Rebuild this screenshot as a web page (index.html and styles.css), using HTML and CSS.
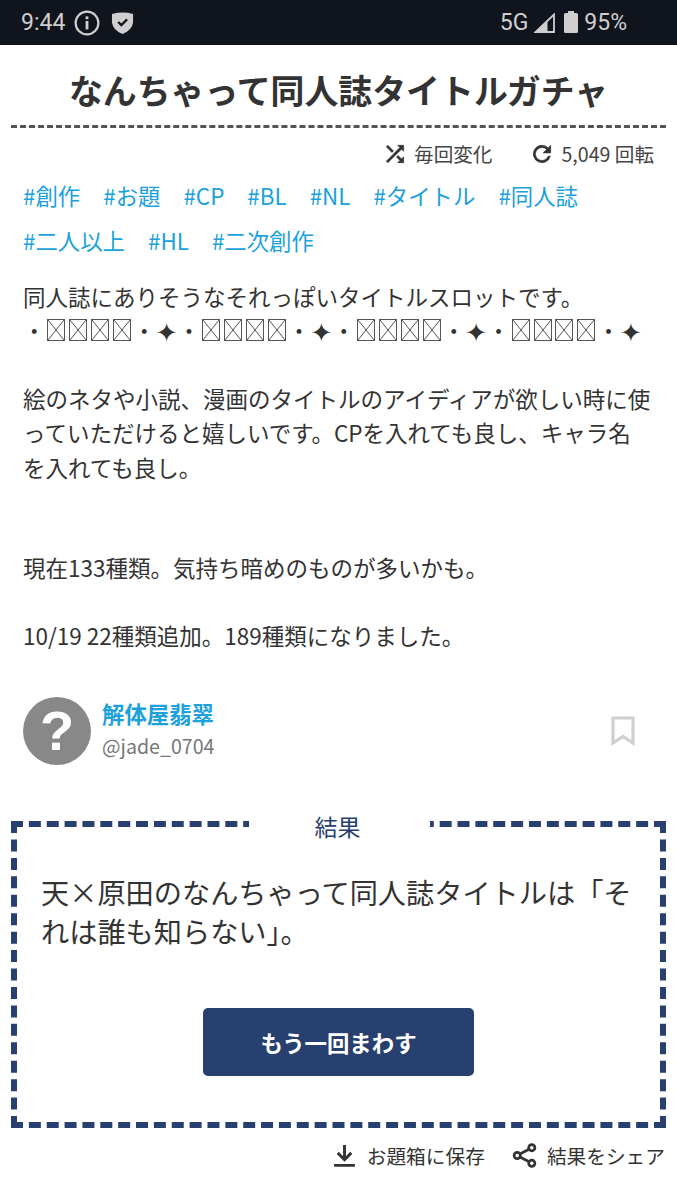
FILE: index.html
```html
<!DOCTYPE html>
<html lang="ja">
<head>
  <meta charset="UTF-8" />
  <title>なんちゃって同人誌タイトルガチャ</title>
  <link rel="stylesheet" href="styles.css">
</head>
<body>
  <!-- status bar -->
  <div class="statusBar">
    <div class="statusGroup">
      <span class="clock">9:44</span>
      <svg class="infoIcon" viewBox="0 0 26 26"><circle cx="13" cy="13" r="11.4" fill="none" stroke="#d0d0d0" stroke-width="2.2"/><rect x="11.6" y="11" width="2.8" height="8.4" fill="#d0d0d0"/><rect x="11.6" y="6.4" width="2.8" height="2.8" fill="#d0d0d0"/></svg>
      <svg class="shieldIcon" viewBox="0 0 24 24"><path d="M1 3 Q12 0 23 3 V12 Q22 20 12 24 Q2 20 1 12Z" fill="#cfcfcf"/><path d="M7.5 11.5 L10.8 14.8 L16.8 8.8" fill="none" stroke="#10141c" stroke-width="2.4"/></svg>
    </div>
    <div class="statusGroup statusRight">
      <span>5G</span>
      <svg class="signalIcon" viewBox="0 0 21 20"><path d="M20 1.5 V19 H1.5Z" fill="none" stroke="#cfcfcf" stroke-width="1.8"/><path d="M13.5 7.5 V20 H0 L13.5 7.5Z" fill="#cfcfcf"/></svg>
      <svg class="batteryIcon" viewBox="0 0 14 22"><path d="M4 2 V0 H10 V2 H12.5 Q14 2 14 3.5 V20.5 Q14 22 12.5 22 H1.5 Q0 22 0 20.5 V3.5 Q0 2 1.5 2Z" fill="#cfcfcf"/></svg>
      <span>95%</span>
    </div>
  </div>

  <div class="page">
    <h1 class="title">なんちゃって同人誌タイトルガチャ</h1>

    <div class="stats">
      <span class="stat">
        <svg class="statIcon" viewBox="0 0 24 24"><path d="M10.6 9.2 5.4 4 4 5.4l5.2 5.2 1.4-1.4zM14.5 4l2 2L4 18.6 5.4 20 18 7.5l2 2V4h-5.5zm.3 9.4-1.4 1.4 3.1 3.1L14.5 20H20v-5.5l-2 2-3.2-3.1z"/></svg>
        毎回変化
      </span>
      <span class="stat">
        <svg class="statIcon" viewBox="0 0 24 24"><path d="M17.65 6.35A8 8 0 1 0 19.73 14h-2.08A6 6 0 1 1 12 6c1.66 0 3.14.69 4.22 1.78L13 11h7V4l-2.35 2.35z"/></svg>
        5,049 回転
      </span>
    </div>

    <div class="tags">
      <a class="tag">#創作</a>
      <a class="tag">#お題</a>
      <a class="tag">#CP</a>
      <a class="tag">#BL</a>
      <a class="tag">#NL</a>
      <a class="tag">#タイトル</a>
      <a class="tag">#同人誌</a>
      <a class="tag">#二人以上</a>
      <a class="tag">#HL</a>
      <a class="tag">#二次創作</a>
    </div>

    <div class="description">
      <p class="intro">同人誌にありそうなそれっぽいタイトルスロットです。<br>
      ・<i class="tofu"></i><i class="tofu"></i><i class="tofu"></i><i class="tofu"></i>・<span class="star">✦</span>・<i class="tofu"></i><i class="tofu"></i><i class="tofu"></i><i class="tofu"></i>・<span class="star">✦</span>・<i class="tofu"></i><i class="tofu"></i><i class="tofu"></i><i class="tofu"></i>・<span class="star">✦</span>・<i class="tofu"></i><i class="tofu"></i><i class="tofu"></i><i class="tofu"></i>・<span class="star">✦</span></p>
      <p>絵のネタや小説、漫画のタイトルのアイディアが欲しい時に使っていただけると嬉しいです。CPを入れても良し、キャラ名<br>を入れても良し。</p>
      <p class="gapBefore">現在133種類。気持ち暗めのものが多いかも。</p>
      <p>10/19 22種類追加。189種類になりました。</p>
    </div>

    <div class="author">
      <div class="avatar">?</div>
      <div class="authorText">
        <div class="authorName">解体屋翡翠</div>
        <div class="authorId">@jade_0704</div>
      </div>
      <svg class="bookmark" viewBox="0 0 24 30"><path d="M2 2 H22 V27 L12 20.5 L2 27Z" fill="none" stroke="#cfcfcf" stroke-width="3.2"/></svg>
    </div>

    <div class="result">
      <div class="resultLabel">結果</div>
      <p class="resultText">天×原田のなんちゃって同人誌タイトルは「それは誰も知らない」。</p>
      <button class="againBtn">もう一回まわす</button>
    </div>

    <div class="actions">
      <span class="action">
        <svg class="actionIcon" viewBox="0 0 24 24"><path d="M12 2v13M5.5 9.5 12 16l6.5-6.5M2 21.5h20" fill="none" stroke="#333" stroke-width="2.8"/></svg>
        お題箱に保存
      </span>
      <span class="action">
        <svg class="actionIcon" viewBox="0 0 24 24"><g fill="none" stroke="#333" stroke-width="2.6"><circle cx="19" cy="4.5" r="3"/><circle cx="5" cy="12" r="3"/><circle cx="19" cy="19.5" r="3"/><path d="M7.6 10.6 16.4 6M7.6 13.4l8.8 4.6"/></g></svg>
        結果をシェア
      </span>
    </div>
  </div>
</body>
</html>
```

FILE: styles.css
```css
html, body {
  margin: 0;
  padding: 0;
  background: white;
  font-family: "Noto Sans CJK JP", "Noto Sans", sans-serif;
  color: #333;
}

p {
  margin: 0;
}

.statusBar {
  display: flex;
  justify-content: space-between;
  align-items: center;
  height: 45px;
  padding: 0 50px 0 21px;
  background: #10141c;
  color: #cfcfcf;
  font-family: Roboto, sans-serif;
  font-size: 23px;
}

.statusGroup {
  display: flex;
  align-items: center;
  gap: 9px;
}

.statusRight {
  gap: 6px;
}

.infoIcon {
  width: 26px;
  height: 26px;
}

.shieldIcon {
  width: 23px;
  height: 23px;
  margin-left: 2px;
}

.signalIcon {
  width: 21px;
  height: 20px;
}

.batteryIcon {
  width: 14px;
  height: 22px;
  margin: 0 0 2px 3px;
}

.page {
  padding: 0 11px;
}

.title {
  margin: 0;
  padding: 18px 0 9px;
  border-bottom: 3px dashed #555;
  font-size: 33.9px;
  line-height: 53px;
  font-weight: 700;
  text-align: center;
}

.stats {
  display: flex;
  justify-content: flex-end;
  gap: 37px;
  padding: 11px 12px 0 0;
  font-size: 19.6px;
  line-height: 30px;
  color: #444;
}

.stat {
  display: flex;
  align-items: center;
  gap: 6px;
}

.statIcon {
  width: 26px;
  height: 26px;
  fill: #333;
  stroke: #333;
  stroke-width: 0.6;
}

.tags {
  display: flex;
  flex-wrap: wrap;
  column-gap: 23px;
  padding: 4px 12px 0;
  font-size: 22.4px;
  line-height: 45px;
  color: #1ba1dc;
}

.description {
  padding: 16px 12px 0;
  font-size: 22.5px;
  line-height: 34.3px;
}

.description p {
  margin-bottom: 34px;
}

.description .intro {
  margin-bottom: 33.5px;
  white-space: nowrap;
}

.description .gapBefore {
  margin-top: 66px;
}

.tofu {
  display: inline-block;
  box-sizing: border-box;
  width: 18px;
  height: 22px;
  margin: 0 1.95px;
  border: 1.5px solid #555;
  vertical-align: -1px;
  background:
    linear-gradient(to top right, transparent calc(50% - 0.8px), #555 50%, transparent calc(50% + 0.8px)),
    linear-gradient(to bottom right, transparent calc(50% - 0.8px), #555 50%, transparent calc(50% + 0.8px));
}

.star {
  font-family: "DejaVu Sans", sans-serif;
  font-size: 26.5px;
  line-height: 1px;
  vertical-align: -2px;
}

.author {
  display: flex;
  align-items: center;
  gap: 11px;
  padding: 8px 31px 0 12px;
}

.avatar {
  flex: none;
  width: 68px;
  height: 68px;
  border-radius: 50%;
  background: #888;
  color: white;
  font-family: "Liberation Sans", sans-serif;
  font-size: 56px;
  font-weight: 700;
  line-height: 68px;
  text-align: center;
}

.authorText {
  flex: 1;
  padding-bottom: 6px;
}

.authorName {
  font-size: 22.4px;
  line-height: 36px;
  font-weight: 700;
  color: #1ba1dc;
}

.authorId {
  font-size: 19.6px;
  line-height: 30px;
  color: #777;
}

.bookmark {
  width: 24px;
  height: 30px;
}

.result {
  position: relative;
  margin-top: 54px;
  padding: 45.5px 24px 46px;
  border: 6px dashed #27406f;
  text-align: center;
}

.resultLabel {
  position: absolute;
  top: -18px;
  left: 50%;
  box-sizing: border-box;
  width: 181px;
  margin-left: -90px;
  padding-right: 3px;
  background: white;
  color: #27406f;
  font-size: 23px;
  line-height: 34px;
}

.resultText {
  font-size: 28.2px;
  line-height: 39px;
  text-align: left;
}

.againBtn {
  display: block;
  width: 271px;
  height: 68px;
  margin: 57.5px auto 0;
  border: none;
  border-radius: 5px;
  background: #27406f;
  color: white;
  font-family: inherit;
  font-size: 22.4px;
  font-weight: 700;
}

.actions {
  display: flex;
  justify-content: flex-end;
  gap: 27px;
  padding: 12px 1px 0 0;
  font-size: 19.7px;
  line-height: 32px;
}

.action {
  display: flex;
  align-items: center;
  gap: 10px;
}

.actionIcon {
  width: 25px;
  height: 27px;
}
```
